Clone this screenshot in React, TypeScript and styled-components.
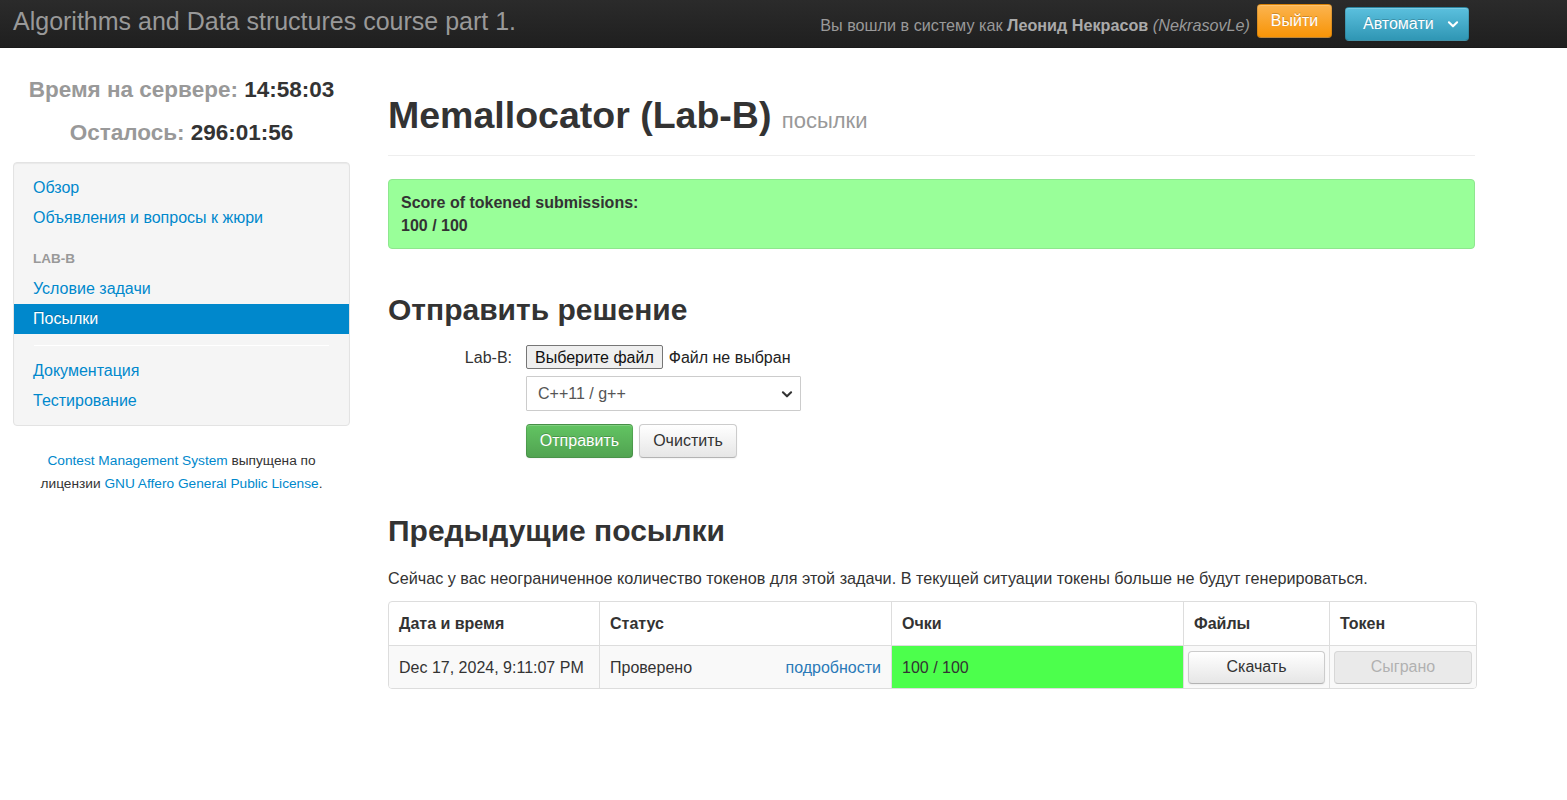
import React from "react";
import styled, { createGlobalStyle, css } from "styled-components";

const GlobalStyle = createGlobalStyle`
	html, body {
		margin: 0;
		padding: 0;
		background: #fff;
	}
	body {
		font-family: "Liberation Sans", Arial, sans-serif;
		font-size: 16px;
		line-height: 23px;
		color: #333;
	}
	* {
		box-sizing: border-box;
	}
`;

const Navbar = styled.div`
	height: 48px;
	display: flex;
	align-items: center;
	padding: 0 98px 0 13px;
	background: linear-gradient(to bottom, #2b2b2b, #1f1f1f);
	border-bottom: 1px solid #1a1a1a;
`;

const Brand = styled.div`
	font-size: 25px;
	color: #999;
	margin-top: -4px;
`;

const NavRight = styled.div`
	margin-left: auto;
	display: flex;
	align-items: center;
`;

const LoggedIn = styled.span`
	color: #999;
	font-size: 16.2px;
	margin-right: 7px;
	margin-top: 3px;
	b {
		color: #aaa;
	}
	i {
		color: #999;
	}
`;

type Variant = "warning" | "info" | "success" | "default";

const gradients: Record<Variant, string> = {
	warning: "linear-gradient(to bottom, #fbb450, #f89406)",
	info: "linear-gradient(to bottom, #5bc0de, #2f96b4)",
	success: "linear-gradient(to bottom, #62c462, #51a351)",
	default: "linear-gradient(to bottom, #ffffff, #e6e6e6)",
};

const Button = styled.button<{ $variant: Variant; $disabled?: boolean }>`
	font-family: inherit;
	font-size: 16px;
	line-height: 20px;
	height: 34px;
	padding: 6px 13px;
	border-radius: 4px;
	cursor: pointer;
	display: inline-flex;
	align-items: center;
	justify-content: center;
	background: ${(p) => gradients[p.$variant]};
	color: ${(p) => (p.$variant === "default" ? "#333" : "#fff")};
	border: 1px solid
		${(p) => (p.$variant === "default" ? "#ccc" : "rgba(0, 0, 0, 0.12)")};
	border-bottom-color: ${(p) =>
		p.$variant === "default" ? "#b3b3b3" : "rgba(0, 0, 0, 0.25)"};
	text-shadow: ${(p) =>
		p.$variant === "default" ? "none" : "0 -1px 0 rgba(0, 0, 0, 0.2)"};
	box-shadow: inset 0 1px 0 rgba(255, 255, 255, 0.2),
		0 1px 2px rgba(0, 0, 0, 0.05);
	${(p) =>
		p.$disabled &&
		css`
			background: #e6e6e6;
			color: #999;
			opacity: 0.75;
			box-shadow: none;
			cursor: default;
		`}
`;

const LogoutButton = styled(Button)`
	width: 75px;
	margin-top: -6px;
`;

const ContestButton = styled(Button)`
	width: 124px;
	margin-left: 13px;
	padding: 6px 8px 6px 17px;
	justify-content: space-between;
`;

const Page = styled.div`
	display: grid;
	grid-template-columns: 337px 1087px;
	column-gap: 38px;
	padding: 0 13px;
	align-items: start;
`;

const Sidebar = styled.div`
	padding-top: 27px;
`;

const Clock = styled.div`
	text-align: center;
	font-size: 22.5px;
	font-weight: bold;
	line-height: 30px;
	color: #333;
	& + & {
		margin-top: 13px;
	}
`;

const ClockLabel = styled.span`
	color: #999;
`;

const Well = styled.div`
	margin-top: 14px;
	background: #f5f5f5;
	border: 1px solid #e3e3e3;
	border-radius: 4px;
	padding: 10px 0 9px;
	box-shadow: inset 0 1px 1px rgba(0, 0, 0, 0.05);
`;

const NavItem = styled.a<{ $active?: boolean }>`
	display: block;
	height: 30px;
	line-height: 30px;
	padding: 0 19px;
	font-size: 16px;
	text-decoration: none;
	color: ${(p) => (p.$active ? "#fff" : "#0088cc")};
	background: ${(p) => (p.$active ? "#0088cc" : "transparent")};
	text-shadow: ${(p) =>
		p.$active ? "0 -1px 0 rgba(0, 0, 0, 0.2)" : "0 1px 0 rgba(255,255,255,0.5)"};
`;

const NavHeader = styled.div`
	margin-top: 11px;
	height: 30px;
	line-height: 30px;
	padding: 0 19px;
	font-size: 13.5px;
	font-weight: bold;
	text-transform: uppercase;
	color: #999;
`;

const NavDivider = styled.div`
	margin: 11px 20px 10px;
	height: 1px;
	background: #e5e5e5;
	border-bottom: 1px solid #fff;
`;

const Footer = styled.p`
	margin: 23px 0 0;
	text-align: center;
	font-size: 13.7px;
	line-height: 23px;
	color: #333;
	a {
		color: #0088cc;
		text-decoration: none;
	}
`;

const Main = styled.div`
	padding-top: 44px;
`;

const PageHeader = styled.div`
	padding-bottom: 11px;
	border-bottom: 1px solid #eee;
`;

const Title = styled.h1`
	margin: 0;
	font-size: 37.5px;
	line-height: 46px;
	font-weight: bold;
	color: #333;
`;

const Subtitle = styled.small`
	font-size: 22px;
	font-weight: normal;
	color: #999;
`;

const Alert = styled.div`
	margin-top: 23px;
	padding: 11px 12px;
	background: #99ff99;
	border: 1px solid #8fe68f;
	border-radius: 4px;
	font-weight: bold;
	font-size: 16px;
	line-height: 23px;
	color: #333;
`;

const SectionTitle = styled.h2<{ $top: number }>`
	margin: ${(p) => p.$top}px 0 0;
	font-size: 30px;
	line-height: 36px;
	font-weight: bold;
	color: #333;
`;

const Form = styled.div`
	margin-top: 17px;
	display: grid;
	grid-template-columns: 124px 1fr;
	column-gap: 14px;
	row-gap: 7px;
	align-items: center;
`;

const Label = styled.label`
	text-align: right;
	color: #333;
	font-size: 16px;
`;

const FileRow = styled.div`
	display: flex;
	align-items: center;
	gap: 6px;
	font-size: 16px;
	color: #333;
`;

const FileButton = styled.span`
	display: inline-flex;
	align-items: center;
	height: 24px;
	padding: 0 8px;
	background: #efefef;
	border: 1px solid #767676;
	border-radius: 2px;
	color: #111;
	font-size: 16px;
`;

const FileName = styled.span`
	color: #222;
`;

const Select = styled.div`
	width: 275px;
	height: 35px;
	display: flex;
	align-items: center;
	justify-content: space-between;
	padding: 0 6px 0 11px;
	border: 1px solid #ccc;
	border-radius: 1px;
	background: #fff;
	color: #555;
	font-size: 16px;
`;

const Actions = styled.div`
	display: flex;
	gap: 6px;
	margin-top: 6px;
`;

const Paragraph = styled.p`
	margin: 18px 0 0;
	font-size: 16.2px;
	line-height: 23px;
`;

const Table = styled.table`
	margin-top: 11px;
	width: 100%;
	border-collapse: separate;
	border-spacing: 0;
	border: 1px solid #ddd;
	border-radius: 4px;
	overflow: hidden;
	font-size: 16px;
	table-layout: fixed;
`;

const Th = styled.th<{ $w: number }>`
	width: ${(p) => p.$w}px;
	height: 43px;
	padding: 0 10px;
	text-align: left;
	font-weight: bold;
	color: #333;
	border-left: 1px solid #ddd;
	&:first-child {
		border-left: none;
	}
`;

const Td = styled.td<{ $bg?: string }>`
	height: 43px;
	padding: 0 10px;
	border-top: 1px solid #ddd;
	border-left: 1px solid #ddd;
	background: ${(p) => p.$bg || "#f9f9f9"};
	color: #333;
	&:first-child {
		border-left: none;
	}
`;

const ButtonTd = styled(Td)`
	padding: 0 4px;
`;

const StatusCell = styled.div`
	display: flex;
	justify-content: space-between;
	a {
		color: #2a7ab8;
		text-decoration: none;
	}
`;

const CellButton = styled(Button)`
	width: 100%;
	height: 33px;
`;

function Chevron({ color, size }: { color: string; size: number }) {
	return (
		<svg width={size} height={size} viewBox="0 0 12 12">
			<path
				d="M2.5 4.5 L6 8 L9.5 4.5"
				fill="none"
				stroke={color}
				strokeWidth="1.8"
				strokeLinecap="round"
				strokeLinejoin="round"
			/>
		</svg>
	);
}

export default function App() {
	return (
		<>
			<GlobalStyle />
			<Navbar>
				<Brand>Algorithms and Data structures course part 1.</Brand>
				<NavRight>
					<LoggedIn>
						Вы вошли в систему как <b>Леонид Некрасов</b>{" "}
						<i>(NekrasovLe)</i>
					</LoggedIn>
					<LogoutButton $variant="warning">Выйти</LogoutButton>
					<ContestButton $variant="info">
						Автомати
						<Chevron color="#fff" size={14} />
					</ContestButton>
				</NavRight>
			</Navbar>
			<Page>
				<Sidebar>
					<Clock>
						<ClockLabel>Время на сервере:</ClockLabel> 14:58:03
					</Clock>
					<Clock>
						<ClockLabel>Осталось:</ClockLabel> 296:01:56
					</Clock>
					<Well>
						<NavItem href="#">Обзор</NavItem>
						<NavItem href="#">Объявления и вопросы к жюри</NavItem>
						<NavHeader>Lab-B</NavHeader>
						<NavItem href="#">Условие задачи</NavItem>
						<NavItem href="#" $active>
							Посылки
						</NavItem>
						<NavDivider />
						<NavItem href="#">Документация</NavItem>
						<NavItem href="#">Тестирование</NavItem>
					</Well>
					<Footer>
						<a href="#">Contest Management System</a> выпущена по
						<br />
						лицензии <a href="#">GNU Affero General Public License</a>.
					</Footer>
				</Sidebar>
				<Main>
					<PageHeader>
						<Title>
							Memallocator (Lab-B) <Subtitle>посылки</Subtitle>
						</Title>
					</PageHeader>
					<Alert>
						Score of tokened submissions:
						<br />
						100 / 100
					</Alert>
					<SectionTitle $top={43}>Отправить решение</SectionTitle>
					<Form>
						<Label>Lab-B:</Label>
						<FileRow>
							<FileButton>Выберите файл</FileButton>
							<FileName>Файл не выбран</FileName>
						</FileRow>
						<span />
						<Select>
							C++11 / g++
							<Chevron color="#333" size={14} />
						</Select>
						<span />
						<Actions>
							<Button $variant="success" style={{ width: 107 }}>
								Отправить
							</Button>
							<Button $variant="default" style={{ width: 98 }}>
								Очистить
							</Button>
						</Actions>
					</Form>
					<SectionTitle $top={55}>Предыдущие посылки</SectionTitle>
					<Paragraph>
						Сейчас у вас неограниченное количество токенов для этой задачи. В
						текущей ситуации токены больше не будут генерироваться.
					</Paragraph>
					<Table>
						<thead>
							<tr>
								<Th $w={210}>Дата и время</Th>
								<Th $w={292}>Статус</Th>
								<Th $w={292}>Очки</Th>
								<Th $w={146}>Файлы</Th>
								<Th $w={147}>Токен</Th>
							</tr>
						</thead>
						<tbody>
							<tr>
								<Td>Dec 17, 2024, 9:11:07 PM</Td>
								<Td>
									<StatusCell>
										Проверено <a href="#">подробности</a>
									</StatusCell>
								</Td>
								<Td $bg="#4cff4c">100 / 100</Td>
								<ButtonTd>
									<CellButton $variant="default">Скачать</CellButton>
								</ButtonTd>
								<ButtonTd>
									<CellButton $variant="default" $disabled>
										Сыграно
									</CellButton>
								</ButtonTd>
							</tr>
						</tbody>
					</Table>
				</Main>
			</Page>
		</>
	);
}
